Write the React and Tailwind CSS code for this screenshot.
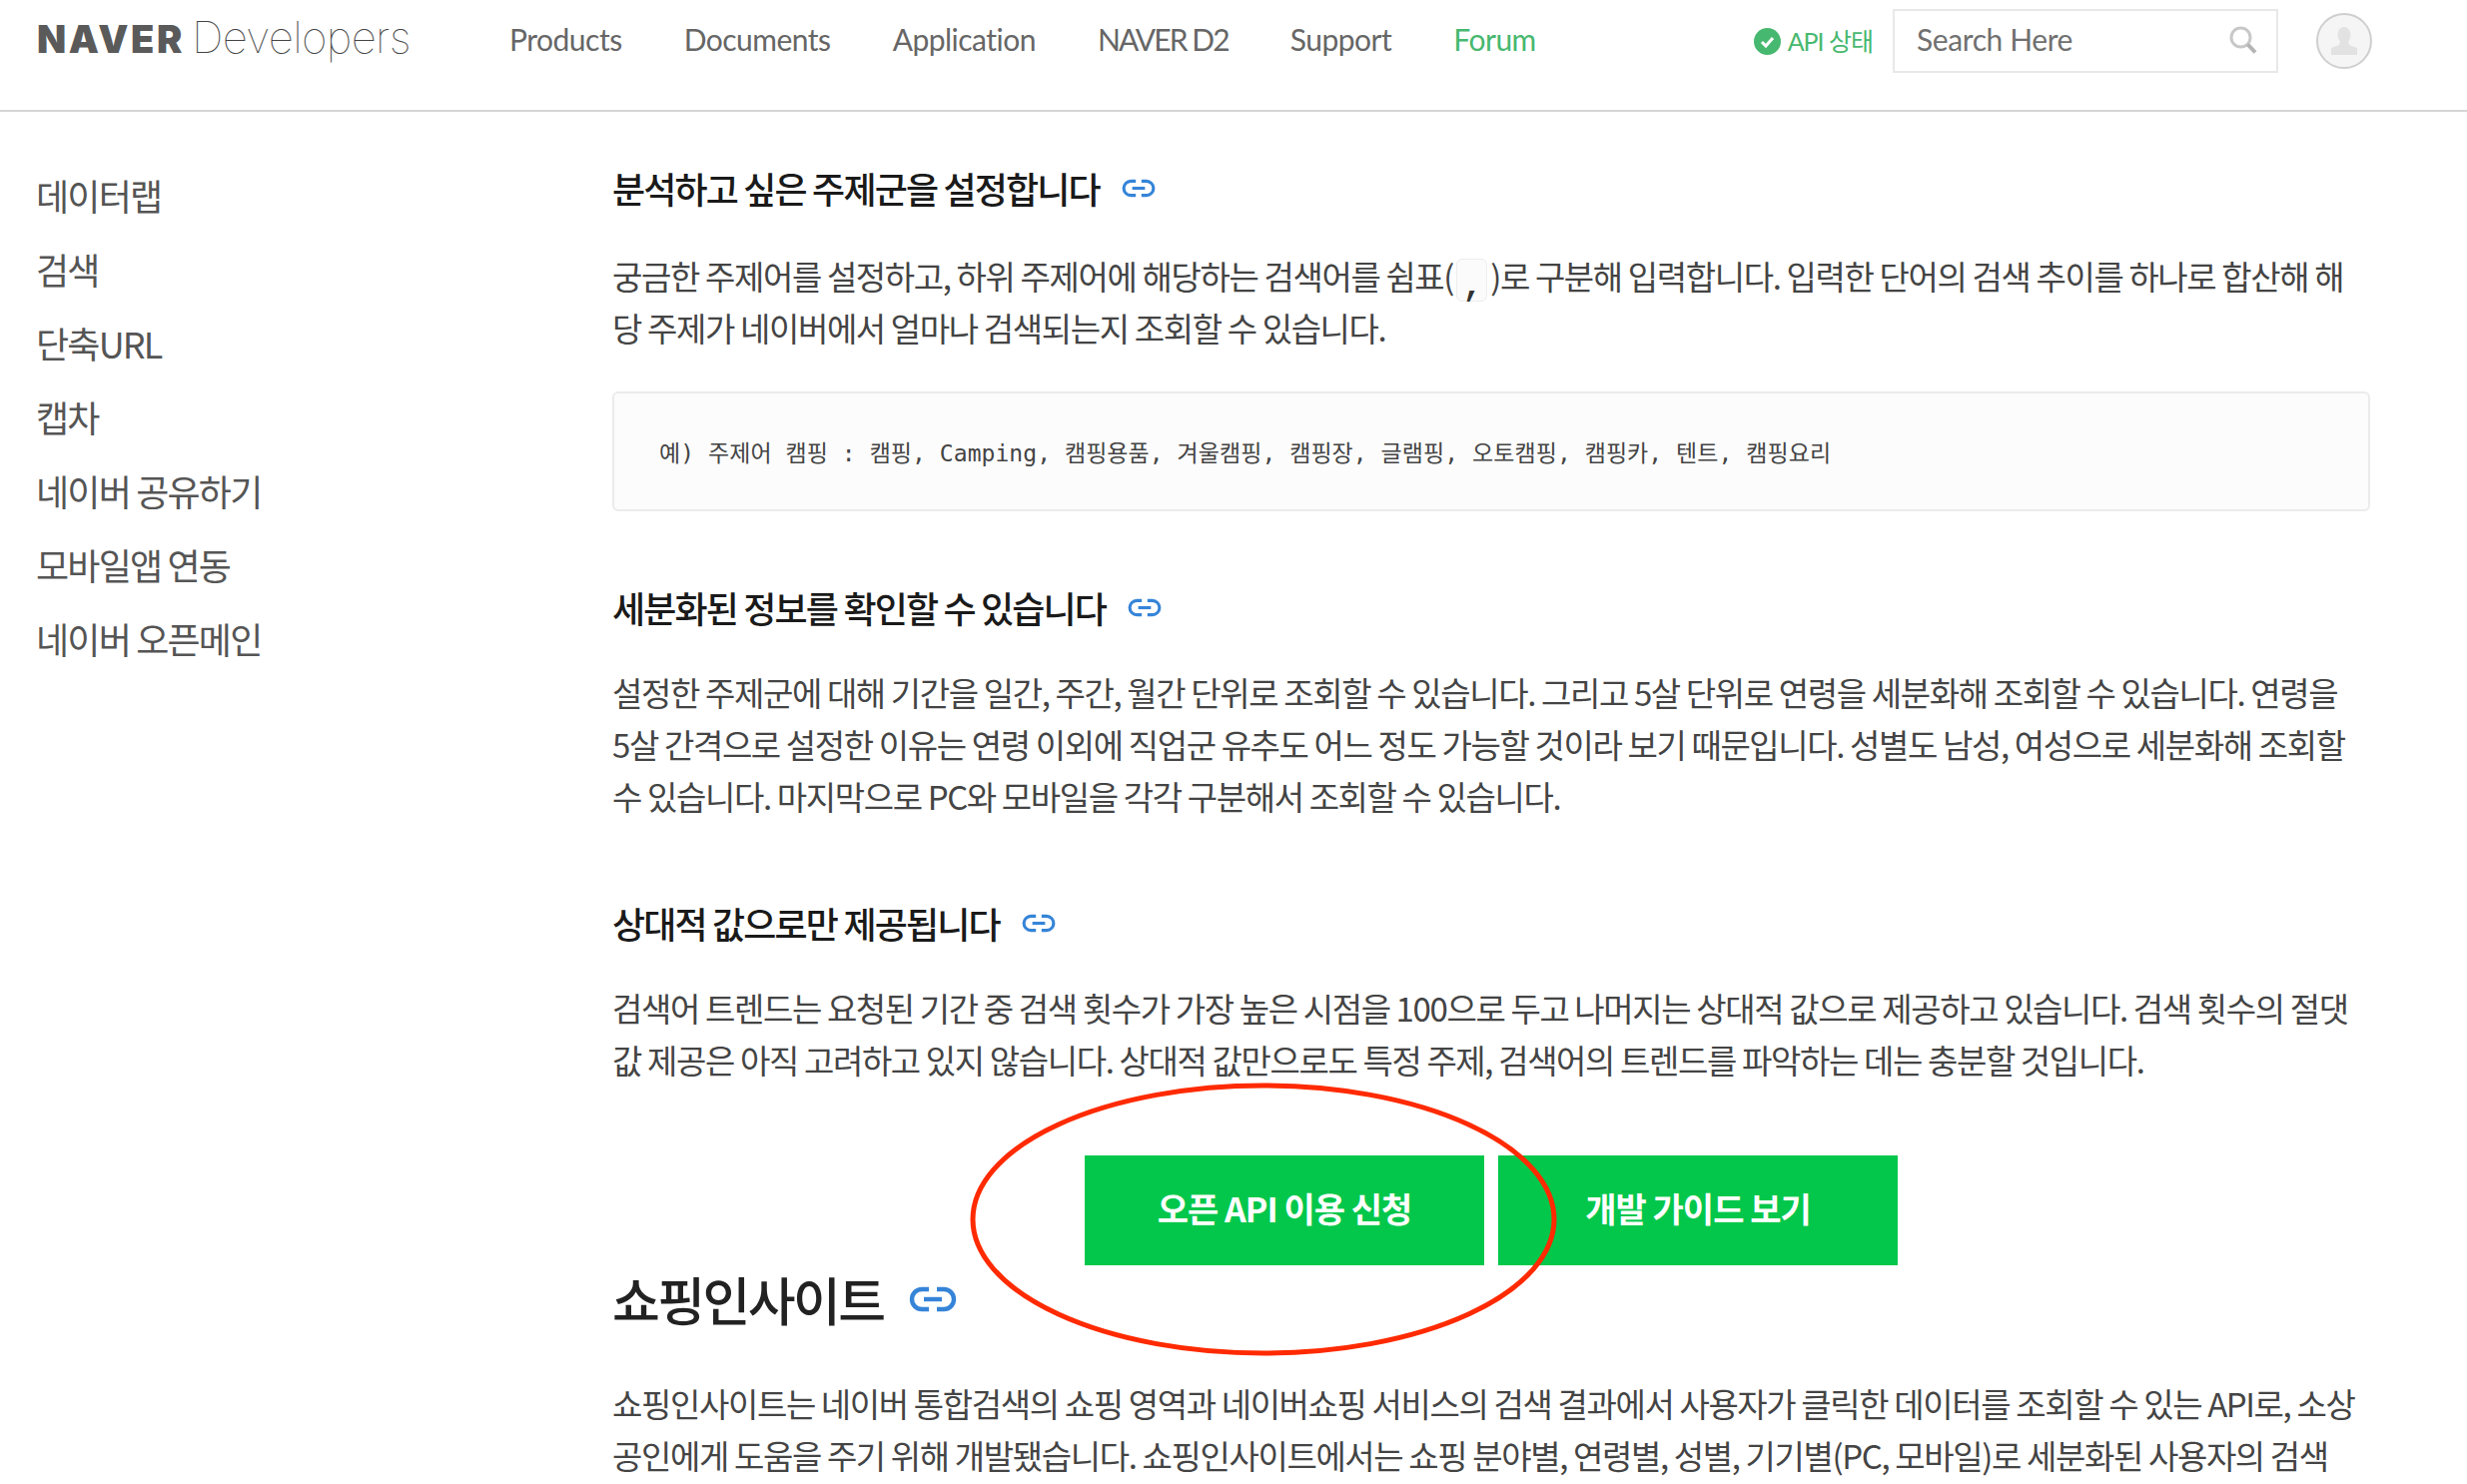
const KR = "font-['Noto_Sans_CJK_KR','Noto_Sans',sans-serif]";

function LinkIcon({ className }) {
  return (
    <svg viewBox="0 0 48 26" className={className} fill="none" stroke="#3584d8" strokeWidth="4.4" strokeLinecap="butt">
      <path d="M20 3H13a10 10 0 0 0 0 20h7" />
      <path d="M28 3h7a10 10 0 0 1 0 20h-7" />
      <path d="M15 13h18" />
    </svg>
  );
}

function H3({ children, icon, className = "" }) {
  return (
    <h3 className={`flex items-center h-[52px] text-[36px] font-medium text-[#1a1a1a] tracking-[-1.85px] whitespace-nowrap ${className}`}>
      <span>{children}</span>
      <LinkIcon className={`w-[34px] h-[19px] ${icon}`} />
    </h3>
  );
}

function Line({ children }) {
  return <span className="block h-[52px] leading-[52px] whitespace-nowrap">{children}</span>;
}

const sidebar = ["데이터랩", "검색", "단축URL", "캡차", "네이버 공유하기", "모바일앱 연동", "네이버 오픈메인"];

export default function App() {
  return (
    <div className={`relative w-[2470px] h-[1486px] overflow-hidden bg-white ${KR}`}>
      <header className="flex items-start h-[112px] border-b-2 border-[#d6d6d6] pr-[95px]">
        <div className="flex items-baseline ml-[37px] mt-[10px] w-[473px] h-[54px] text-[#5a5a5a] whitespace-nowrap">
          <span className="font-['Inter',sans-serif] font-black text-[38px] tracking-[2.6px] leading-[54px]">NAVER</span>
          <span className="ml-[7px] font-['Inter',sans-serif] font-thin text-[#444] text-[44px] tracking-[-0.7px] leading-[54px]">Developers</span>
        </div>
        <nav className="flex gap-[62px] mt-[16px] font-['Lato',sans-serif] text-[30px] leading-[46px] text-[#666] tracking-[-0.5px] whitespace-nowrap">
          <span>Products</span>
          <span>Documents</span>
          <span>Application</span>
          <span className="tracking-[-1.9px]">NAVER D2</span>
          <span>Support</span>
          <span className="text-[#47b86f]">Forum</span>
        </nav>
        <div className="flex-1" />
        <div className="flex items-center mt-[28px] h-[27px] gap-[7px] text-[#47b86f] text-[25px] tracking-[-1px] whitespace-nowrap font-['Lato','Noto_Sans_CJK_KR',sans-serif]">
          <svg viewBox="0 0 27 27" className="w-[27px] h-[27px]">
            <circle cx="13.5" cy="13.5" r="13.5" fill="#47b86f" />
            <path d="M8 14l4 4 7-8" fill="none" stroke="#fff" strokeWidth="3" />
          </svg>
          <span>API 상태</span>
        </div>
        <div className="flex items-center justify-between ml-[20px] mt-[9px] w-[386px] h-[64px] border-2 border-[#e8e8e8] pl-[22px] pr-[19px]">
          <span className="font-['Lato',sans-serif] text-[30px] text-[#707070] tracking-[-0.4px] -mt-[4px]">Search Here</span>
          <svg viewBox="0 0 28 28" className="w-[28px] h-[28px] mt-[-2px]" fill="none">
            <circle cx="11.5" cy="11.5" r="9.5" stroke="#c8c8c8" strokeWidth="3" />
            <path d="M18.5 18.5l7.5 8" stroke="#b4b4b4" strokeWidth="4" />
          </svg>
        </div>
        <div className="flex items-center justify-center ml-[38px] mt-[13px] w-[56px] h-[56px] rounded-full border-2 border-[#cfcfcf] bg-[#f5f5f5]">
          <svg viewBox="0 0 26 28" className="w-[26px] h-[28px]" fill="#e2e2e2">
            <ellipse cx="13" cy="8" rx="6.5" ry="8" />
            <path d="M9 14h8l1 4 8 3v7H0v-7l8-3z" />
          </svg>
        </div>
      </header>

      <div className="flex">
        <aside className="w-[613px] shrink-0 pl-[36px] pt-[46px] text-[36px] text-[#555] tracking-[-1.8px]">
          {sidebar.map((s) => (
            <div key={s} className="h-[74px] leading-[74px] whitespace-nowrap">{s}</div>
          ))}
        </aside>

        <main className="w-[1760px] text-[33px] text-[#444] tracking-[-1.38px]">
          <H3 className="mt-[50px]" icon="ml-[22px]">분석하고 싶은 주제군을 설정합니다</H3>
          <p className="mt-[36px]">
            <Line>
              궁금한 주제어를 설정하고, 하위 주제어에 해당하는 검색어를 쉼표(
              <code className="inline-block mx-[3px] w-[31px] h-[43px] leading-[56px] text-center align-[-6px] rounded-[6px] border border-[#ededed] bg-[#fbfbfb] font-bold text-[#333]">,</code>
              )로 구분해 입력합니다. 입력한 단어의 검색 추이를 하나로 합산해 해
            </Line>
            <Line>당 주제가 네이버에서 얼마나 검색되는지 조회할 수 있습니다.</Line>
          </p>
          <pre className="mt-[38px] flex items-center h-[120px] pl-[45px] rounded-[6px] border-2 border-[#ebebeb] bg-[#fcfcfc] text-[23px] text-[#444] tracking-[0.05px] font-['DejaVu_Sans_Mono','Noto_Sans_CJK_KR',monospace] whitespace-pre">
            <span className="mt-[4px]">예) 주제어 캠핑 : 캠핑, Camping, 캠핑용품, 겨울캠핑, 캠핑장, 글램핑, 오토캠핑, 캠핑카, 텐트, 캠핑요리</span>
          </pre>
          <H3 className="mt-[70px]" icon="ml-[22px]">세분화된 정보를 확인할 수 있습니다</H3>
          <p className="mt-[33px]">
            <Line>설정한 주제군에 대해 기간을 일간, 주간, 월간 단위로 조회할 수 있습니다. 그리고 5살 단위로 연령을 세분화해 조회할 수 있습니다. 연령을</Line>
            <Line>5살 간격으로 설정한 이유는 연령 이외에 직업군 유추도 어느 정도 가능할 것이라 보기 때문입니다. 성별도 남성, 여성으로 세분화해 조회할</Line>
            <Line>수 있습니다. 마지막으로 PC와 모바일을 각각 구분해서 조회할 수 있습니다.</Line>
          </p>
          <H3 className="mt-[75px]" icon="ml-[22px]">상대적 값으로만 제공됩니다</H3>
          <p className="mt-[33px]">
            <Line>검색어 트렌드는 요청된 기간 중 검색 횟수가 가장 높은 시점을 100으로 두고 나머지는 상대적 값으로 제공하고 있습니다. 검색 횟수의 절댓</Line>
            <Line>값 제공은 아직 고려하고 있지 않습니다. 상대적 값만으로도 특정 주제, 검색어의 트렌드를 파악하는 데는 충분할 것입니다.</Line>
          </p>
          <div className="flex justify-center gap-[14px] mt-[70px]">
            <button className="w-[400px] h-[110px] pb-[5px] bg-[#03c74b] text-white text-[34px] font-bold tracking-[-1px]">오픈 API 이용 신청</button>
            <button className="w-[400px] h-[110px] pb-[5px] bg-[#03c74b] text-white text-[34px] font-bold tracking-[-1px]">개발 가이드 보기</button>
          </div>
          <h2 className="flex items-center h-[70px] -mt-[1px] text-[52px] font-medium text-[#222] tracking-[-2.6px] whitespace-nowrap">
            <span>쇼핑인사이트</span>
            <LinkIcon className="w-[48px] h-[26px] ml-[26px]" />
          </h2>
          <p className="mt-[43px]">
            <Line>쇼핑인사이트는 네이버 통합검색의 쇼핑 영역과 네이버쇼핑 서비스의 검색 결과에서 사용자가 클릭한 데이터를 조회할 수 있는 API로, 소상</Line>
            <Line>공인에게 도움을 주기 위해 개발됐습니다. 쇼핑인사이트에서는 쇼핑 분야별, 연령별, 성별, 기기별(PC, 모바일)로 세분화된 사용자의 검색</Line>
          </p>
        </main>
      </div>

      <svg viewBox="0 0 590 276" className="absolute left-[970px] top-[1084px] w-[590px] h-[276px] pointer-events-none" fill="none">
        <ellipse cx="295" cy="137" rx="291" ry="134" stroke="#ff2a00" strokeWidth="5" />
      </svg>
    </div>
  );
}
